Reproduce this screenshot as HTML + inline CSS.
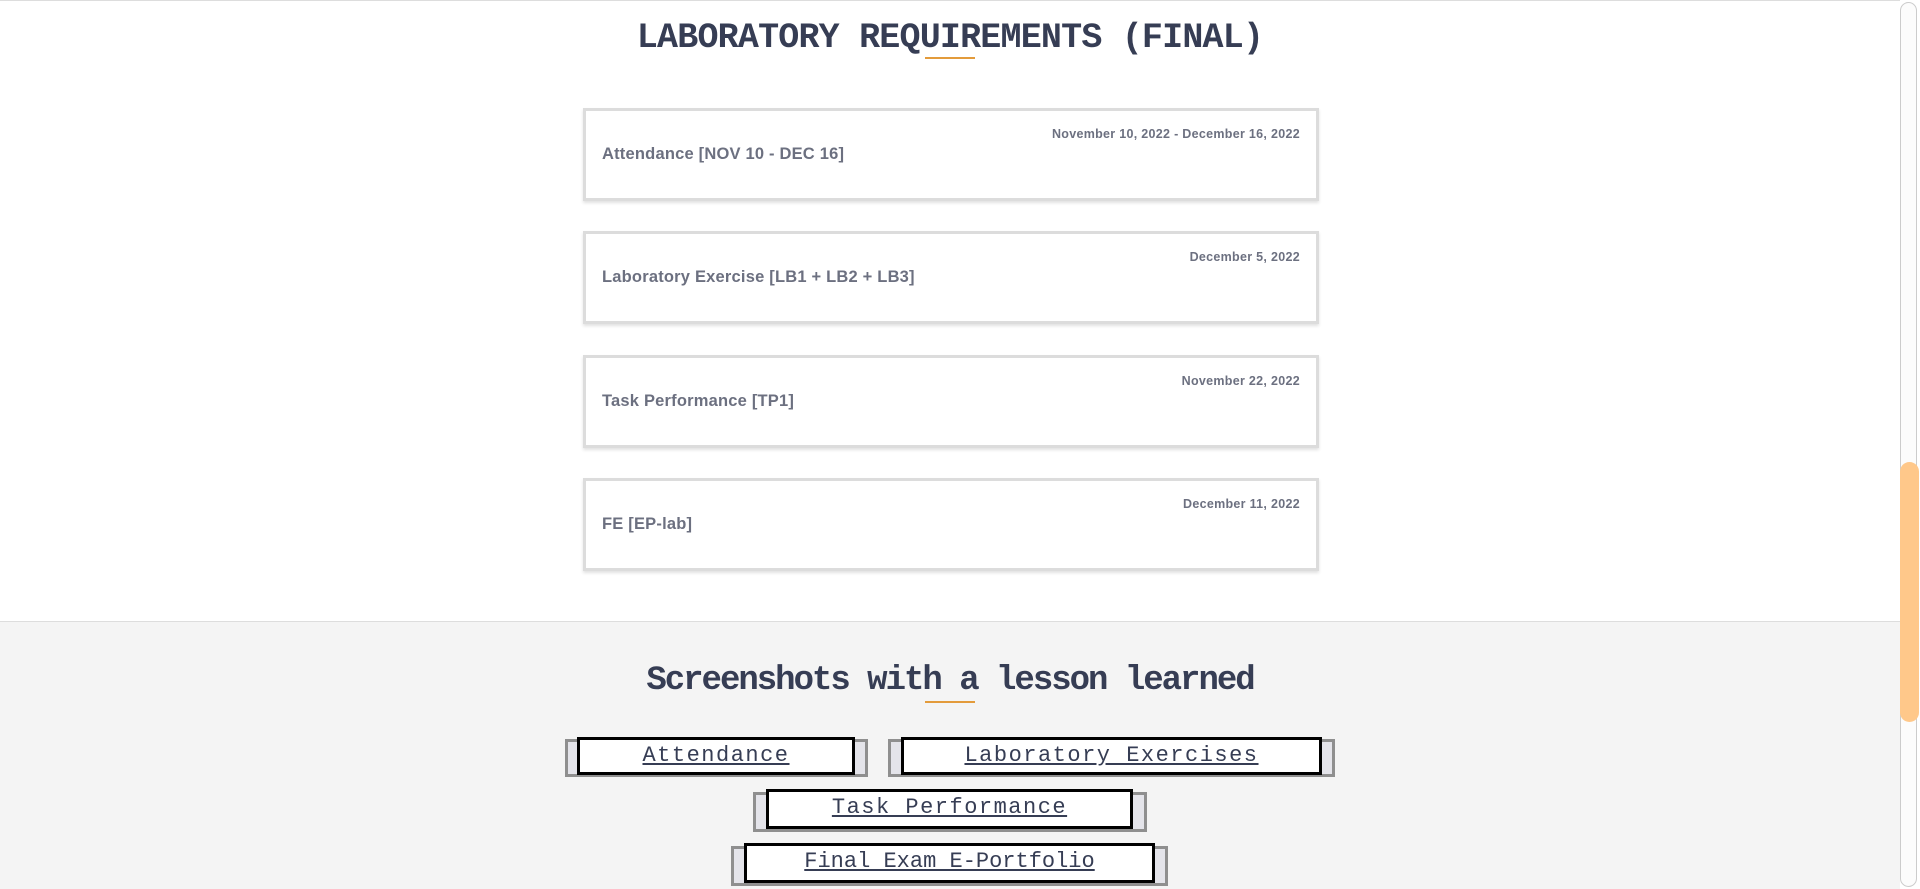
<!DOCTYPE html>
<html><head><meta charset="utf-8"><style>
*{margin:0;padding:0;box-sizing:border-box}
html,body{width:1920px;height:889px;overflow:hidden;background:#fff;font-family:"Liberation Sans",sans-serif}
.top{position:absolute;left:0;top:0;width:1900px;height:1px;background:#ddd}
.h{position:absolute;left:0;width:1900px;text-align:center;color:#363d54;font-family:"Liberation Mono",monospace;white-space:nowrap}
.ul{position:absolute;height:2px;background:#e39b3b}
.card{position:absolute;left:583px;width:736px;height:93px;border:3px solid #dcdcdc;background:#fff;box-shadow:0 2px 3px rgba(0,0,0,.12)}
.card .d{position:absolute;right:16px;top:16px;font-family:"Liberation Sans Narrow","Liberation Sans",sans-serif;font-weight:bold;font-size:12.5px;color:#6c7080;letter-spacing:.3px}
.card .t{position:absolute;left:16px;top:34px;font-family:"Liberation Sans Narrow","Liberation Sans",sans-serif;font-weight:bold;font-size:16.5px;color:#6c7080;letter-spacing:.2px}
.gray{position:absolute;left:0;top:621px;width:1900px;height:268px;background:#f4f4f4;border-top:1px solid #ddd}
.bg{position:absolute;border:3px solid #8f8f8f;background:#e4e4ea}
.bb{position:absolute;border:3px solid #000;background:#fff;text-align:center;font-family:"Liberation Mono",monospace;font-size:22px;color:#363d54;text-decoration:underline;line-height:32px;letter-spacing:1.5px}
.track{position:absolute;left:1900px;top:2px;width:17px;height:885px;border-radius:9px;border:1px solid #ccc;background:#fcfcfc}
.thumb{position:absolute;left:1900px;top:462px;width:19px;height:260px;border-radius:10px;background:#ffc88a}
</style></head><body>
<div class="top"></div>
<div class="h" style="top:18px;font-size:35px;font-weight:bold;letter-spacing:-0.8px">LABORATORY REQUIREMENTS (FINAL)</div>
<div class="ul" style="left:925px;top:57px;width:50px"></div>
<div class="card" style="top:108px"><div class="d">November 10, 2022 - December 16, 2022</div><div class="t">Attendance [NOV 10 - DEC 16]</div></div>
<div class="card" style="top:231px"><div class="d">December 5, 2022</div><div class="t">Laboratory Exercise [LB1 + LB2 + LB3]</div></div>
<div class="card" style="top:355px"><div class="d">November 22, 2022</div><div class="t">Task Performance [TP1]</div></div>
<div class="card" style="top:478px"><div class="d">December 11, 2022</div><div class="t">FE [EP-lab]</div></div>
<div class="gray"></div>
<div class="h" style="top:662px;font-size:34px;font-weight:bold;letter-spacing:-2px">Screenshots with a lesson learned</div>
<div class="ul" style="left:925px;top:701px;width:50px"></div>
<div class="bg" style="left:565px;top:739px;width:303px;height:38px"></div>
<div class="bb" style="left:577px;top:737px;width:278px;height:38px">Attendance</div>
<div class="bg" style="left:888px;top:739px;width:447px;height:38px"></div>
<div class="bb" style="left:901px;top:737px;width:421px;height:38px">Laboratory Exercises</div>
<div class="bg" style="left:753px;top:792px;width:394px;height:40px"></div>
<div class="bb" style="left:766px;top:789px;width:367px;height:40px">Task Performance</div>
<div class="bg" style="left:731px;top:846px;width:437px;height:40px"></div>
<div class="bb" style="left:744px;top:843px;width:411px;height:40px;letter-spacing:0">Final Exam E-Portfolio</div>
<div class="track"></div>
<div class="thumb"></div>
</body></html>
